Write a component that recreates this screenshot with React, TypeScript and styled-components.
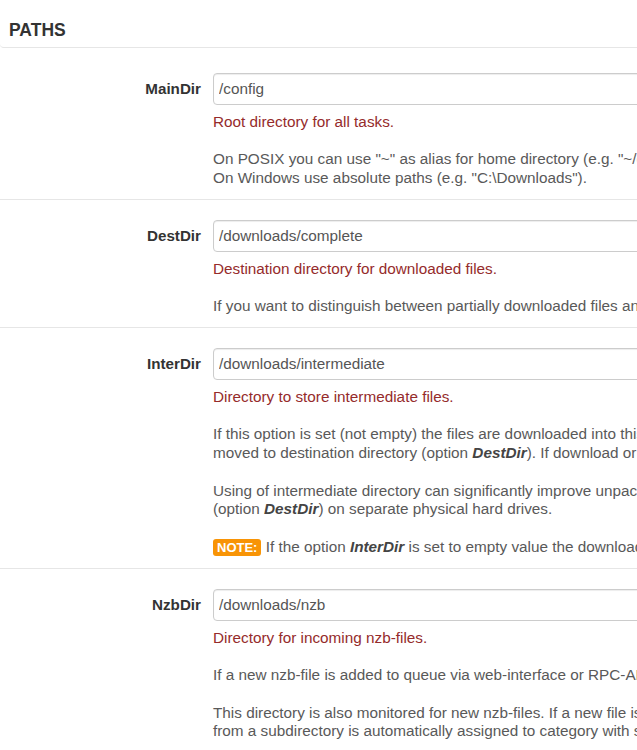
import React from "react";
import styled, { createGlobalStyle } from "styled-components";

const GlobalStyle = createGlobalStyle`
  html, body {
    margin: 0;
    padding: 0;
    background: #ffffff;
    overflow: hidden;
  }
  body {
    font-family: "Liberation Sans", Arial, sans-serif;
    font-size: 15px;
    color: #555555;
  }
`;

const Page = styled.div`
  width: 1000px;
`;

const SectionHeader = styled.h2`
  margin: 0;
  padding: 20px 0 7px 9px;
  font-size: 17.5px;
  line-height: 20px;
  font-weight: bold;
  color: #333333;
  border-bottom: 1px solid #e6e6e6;
  border-bottom-left-radius: 4px;
`;

const Row = styled.div<{ $first?: boolean }>`
  display: grid;
  grid-template-columns: 201px 700px;
  column-gap: 12px;
  padding: ${(p) => (p.$first ? "25px" : "20px")} 0 11.4px 0;
  border-bottom: 1px solid #e6e6e6;
`;

const Label = styled.label`
  text-align: right;
  font-weight: bold;
  font-size: 15.2px;
  line-height: 32px;
  color: #333333;
`;

const Field = styled.div`
  display: flex;
  flex-direction: column;
`;

const TextInput = styled.input`
  box-sizing: border-box;
  width: 700px;
  height: 32px;
  margin: 0;
  padding: 0 5px;
  border: 1px solid #cccccc;
  border-radius: 4px;
  box-shadow: inset 0 1px 1px rgba(0, 0, 0, 0.075);
  font-family: "Liberation Sans", Arial, sans-serif;
  font-size: 15.3px;
  color: #555555;
  background: #ffffff;
  outline: none;
`;

const Help = styled.div`
  margin-top: 7.6px;
  font-size: 15.3px;
  line-height: 18.75px;
  white-space: nowrap;
`;

const Lead = styled.div`
  color: #952b2b;
`;

const Para = styled.div`
  margin-top: 18.75px;
  color: #595959;
`;

const Line = styled.div``;

const Opt = styled.b`
  font-style: italic;
  color: #444444;
`;

const Note = styled.span`
  display: inline-block;
  padding: 2px 4px;
  border-radius: 3px;
  background: #f89406;
  color: #ffffff;
  font-weight: bold;
  font-size: 13px;
  line-height: 13px;
  vertical-align: baseline;
`;

type Setting = {
  name: string;
  value: string;
  lead: string;
  paras: React.ReactNode[][];
};

const settings: Setting[] = [
  {
    name: "MainDir",
    value: "/config",
    lead: "Root directory for all tasks.",
    paras: [
      [
        <>On POSIX you can use "~" as alias for home directory (e.g. "~/downloads").</>,
        <>On Windows use absolute paths (e.g. "C:\Downloads").</>,
      ],
    ],
  },
  {
    name: "DestDir",
    value: "/downloads/complete",
    lead: "Destination directory for downloaded files.",
    paras: [
      [
        <>
          If you want to distinguish between partially downloaded files and completed downloads, use also option{" "}
          <Opt>InterDir</Opt>.
        </>,
      ],
    ],
  },
  {
    name: "InterDir",
    value: "/downloads/intermediate",
    lead: "Directory to store intermediate files.",
    paras: [
      [
        <>
          If this option is set (not empty) the files are downloaded into this directory first. After successful
          download of nzb-file (including all post-processing scripts) they are
        </>,
        <>
          moved to destination directory (option <Opt>DestDir</Opt>). If download or unpack fail the files remain in
          intermediate directory.
        </>,
      ],
      [
        <>
          Using of intermediate directory can significantly improve unpack performance if you can put intermediate
          directory (option <Opt>InterDir</Opt>) and destination directory
        </>,
        <>
          (option <Opt>DestDir</Opt>) on separate physical hard drives.
        </>,
      ],
      [
        <>
          <Note>NOTE:</Note> If the option <Opt>InterDir</Opt> is set to empty value the downloaded files are put
          directly to destination directory (option <Opt>DestDir</Opt>).
        </>,
      ],
    ],
  },
  {
    name: "NzbDir",
    value: "/downloads/nzb",
    lead: "Directory for incoming nzb-files.",
    paras: [
      [
        <>
          If a new nzb-file is added to queue via web-interface or RPC-API, it is saved into this directory and then
          processed by extension scripts (option <Opt>Extensions</Opt>).
        </>,
      ],
      [
        <>
          This directory is also monitored for new nzb-files. If a new file is found it is added to download queue.
          The directory can have subdirectories. A nzb-file
        </>,
        <>from a subdirectory is automatically assigned to category with subdirectory's name.</>,
      ],
    ],
  },
];

export default function App() {
  return (
    <Page>
      <GlobalStyle />
      <SectionHeader>PATHS</SectionHeader>
      {settings.map((s, i) => (
        <Row key={s.name} $first={i === 0}>
          <Label>{s.name}</Label>
          <Field>
            <TextInput readOnly value={s.value} />
            <Help>
              <Lead>{s.lead}</Lead>
              {s.paras.map((p, j) => (
                <Para key={j}>
                  {p.map((l, k) => (
                    <Line key={k}>{l}</Line>
                  ))}
                </Para>
              ))}
            </Help>
          </Field>
        </Row>
      ))}
    </Page>
  );
}
